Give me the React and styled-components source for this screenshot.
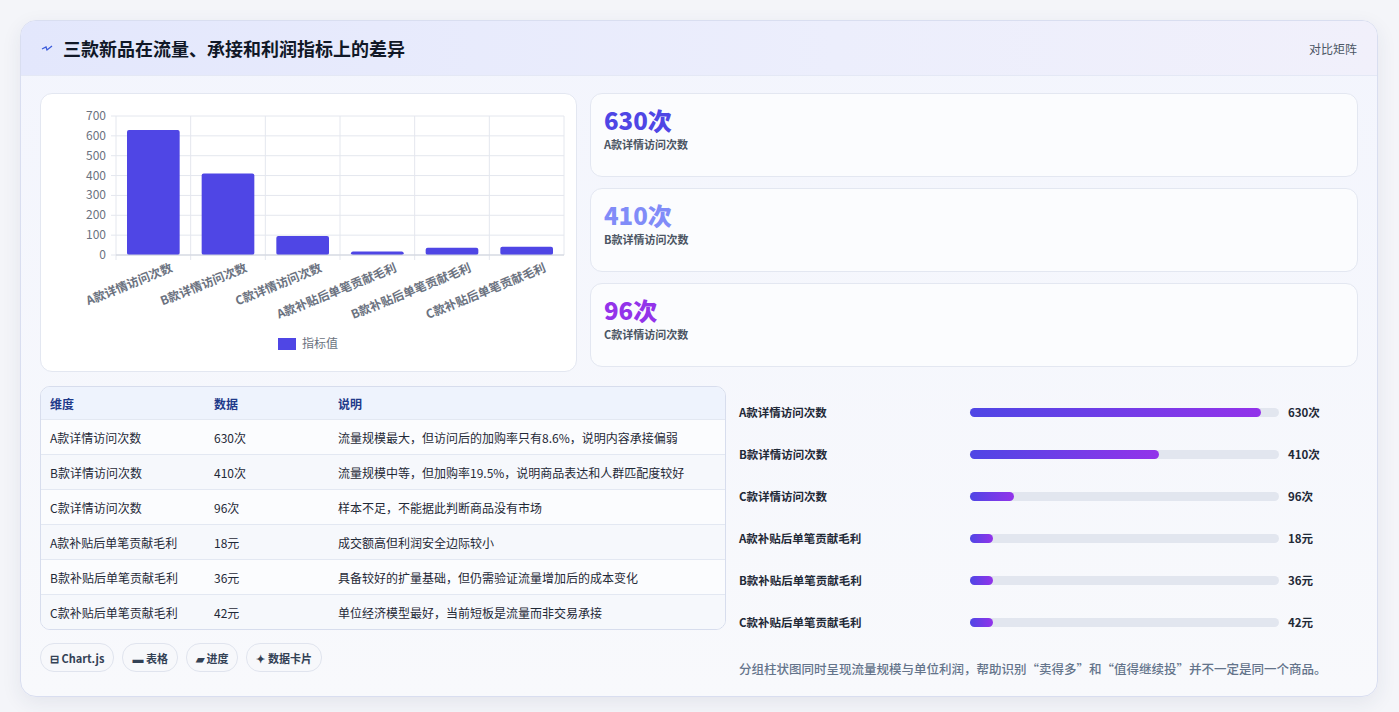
import React from "react";
import styled, { createGlobalStyle } from "styled-components";

const Global = createGlobalStyle`
  body { margin: 0; background: #f4f5f9; font-family: "Noto Sans CJK SC", "Noto Sans", sans-serif; }
`;

const rows = [
  { name: "A款详情访问次数", v: 630, unit: "次", note: "流量规模最大，但访问后的加购率只有8.6%，说明内容承接偏弱" },
  { name: "B款详情访问次数", v: 410, unit: "次", note: "流量规模中等，但加购率19.5%，说明商品表达和人群匹配度较好" },
  { name: "C款详情访问次数", v: 96, unit: "次", note: "样本不足，不能据此判断商品没有市场" },
  { name: "A款补贴后单笔贡献毛利", v: 18, unit: "元", note: "成交额高但利润安全边际较小" },
  { name: "B款补贴后单笔贡献毛利", v: 36, unit: "元", note: "具备较好的扩量基础，但仍需验证流量增加后的成本变化" },
  { name: "C款补贴后单笔贡献毛利", v: 42, unit: "元", note: "单位经济模型最好，当前短板是流量而非交易承接" },
];

const Page = styled.div`padding: 20px 21px 20px 20px;`;
const Card = styled.div`
  background: linear-gradient(180deg, #f3f5fd, #f8f9fc);
  border: 1px solid #d9def0; border-radius: 16px;
  box-shadow: 0 6px 20px rgba(40,50,90,0.08); overflow: hidden;
`;
const Header = styled.div`
  height: 54px; display: flex; align-items: center; justify-content: space-between;
  padding: 0 20px; background: linear-gradient(90deg, #e3e7fc, #eceefc 60%, #f1f0fb);
  border-bottom: 1px solid #e4e8f5;
`;
const Title = styled.h1`
  margin: 0; font-size: 18px; font-weight: 700; color: #111827; display: flex; align-items: center; gap: 10px;
`;
const Tag = styled.span`font-size: 12px; color: #4b5563;`;
const Body = styled.div`padding: 17px 19px 18px 19px;`;
const Top = styled.div`display: grid; grid-template-columns: 537px 1fr; gap: 13px;`;
const Panel = styled.div`
  background: #fff; border: 1px solid #e3e7f1; border-radius: 12px;
`;
const Stats = styled.div`display: flex; flex-direction: column; gap: 11px;`;
const Stat = styled(Panel)`height: 84px; box-sizing: border-box; padding: 10px 13px; background: #fbfcfe;`;
const StatNum = styled.div`font-size: 24px; font-weight: 800; color: ${p => p.c}; line-height: 32px;`;
const StatLbl = styled.div`font-size: 11px; font-weight: 600; color: #4b5563;`;
const Bottom = styled.div`display: grid; grid-template-columns: 686px 1fr; gap: 13px; margin-top: 14px;`;
const Table = styled.div`
  border: 1px solid #d7dded; border-radius: 10px; overflow: hidden; background: #fbfcfe;
`;
const Row = styled.div`
  display: grid; grid-template-columns: 164px 124px 1fr; height: 35px; align-items: center;
  padding-left: 9px; font-size: 12px; color: ${p => p.head ? "#1e3a8a" : "#1f2937"};
  font-weight: ${p => p.head ? 600 : 400};
  background: ${p => p.head ? "#eef3fd" : p.alt ? "#f6f8fc" : "#fbfcfe"};
  border-top: ${p => p.head ? "none" : "1px solid #e3e8f2"};
  height: ${p => p.head ? "32px" : "34px"};
`;
const Chips = styled.div`display: flex; gap: 8px; margin-top: 13px;`;
const Chip = styled.span`
  height: 27px; padding: 0 9px; border: 1px solid #e0e4ee; border-radius: 14px; background: #f7f8fb;
  display: inline-flex; align-items: center; font-size: 11px; font-weight: 600; color: #334155;
`;
const Bars = styled.div`padding-top: 5px;`;
const BarRow = styled.div`
  display: grid; grid-template-columns: 231px 318px 1fr; align-items: center; gap: 0; height: 42px;
  font-size: 11.5px; font-weight: 600; color: #1f2937;
`;
const Track = styled.div`height: 9px; border-radius: 5px; background: #e2e6ef; margin-right: 9px; position: relative;`;
const Fill = styled.div`height: 100%; border-radius: 5px; background: linear-gradient(90deg, #4f46e5, #9333ea);`;
const Note = styled.p`margin: 16px 0 0; font-size: 12.5px; color: #64748b; font-weight: 500;`;

function Chart() {
  const x0 = 75, x1 = 523, y0 = 161, yt = 22, w = (x1 - x0) / 6;
  const sy = v => y0 - (v / 700) * (y0 - yt);
  return (
    <svg width="535" height="277" style={{ display: "block" }} fontFamily="'Noto Sans CJK SC', sans-serif">
      {[0, 100, 200, 300, 400, 500, 600, 700].map(t => (
        <g key={t}>
          <line x1={x0 - 5} x2={x1} y1={sy(t)} y2={sy(t)} stroke="#e4e7ee" />
          <text x={x0 - 10} y={sy(t) + 4} fontSize="12" fill="#6b7280" textAnchor="end">{t}</text>
        </g>
      ))}
      {rows.map((r, i) => <line key={i} x1={x0 + i * w} x2={x0 + i * w} y1={yt} y2={y0 + 5} stroke="#e4e7ee" />)}
      <line x1={x1} x2={x1} y1={yt} y2={y0} stroke="#e4e7ee" />
      {rows.map((r, i) => (
        <rect key={i} x={x0 + i * w + 11} width={w - 22} y={sy(r.v)} height={y0 - sy(r.v)} rx="2" fill="#4f46e5" />
      ))}
      <line x1={x0} x2={x1} y1={y0} y2={y0} stroke="#cfd3dc" />
      {rows.map((r, i) => (
        <text key={i} transform={`translate(${x0 + i * w + w / 2 + 20},${y0 + 16}) rotate(-22)`} fontSize="12" fill="#6b7280" textAnchor="end" fontWeight="600">{r.name}</text>
      ))}
      <rect x="237" y="244" width="18" height="12" fill="#4f46e5" />
      <text x="261" y="254" fontSize="12" fill="#6b7280">指标值</text>
    </svg>
  );
}

export default function App() {
  const colors = ["#4f46e5", "#818cf8", "#9333ea"];
  return (
    <Page>
      <Global />
      <Card>
        <Header>
          <Title>
            <svg width="12" height="10" viewBox="0 0 12 10"><path d="M1 6 L5 4 L6 7 L11 3" stroke="#3b5bdb" strokeWidth="1.3" fill="none" /></svg>
            三款新品在流量、承接和利润指标上的差异
          </Title>
          <Tag>对比矩阵</Tag>
        </Header>
        <Body>
          <Top>
            <Panel><Chart /></Panel>
            <Stats>
              {rows.slice(0, 3).map((r, i) => (
                <Stat key={i}><StatNum c={colors[i]}>{r.v}{r.unit}</StatNum><StatLbl>{r.name}</StatLbl></Stat>
              ))}
            </Stats>
          </Top>
          <Bottom>
            <div>
              <Table>
                <Row head><span>维度</span><span>数据</span><span>说明</span></Row>
                {rows.map((r, i) => (
                  <Row key={i} alt={i % 2 === 1}><span>{r.name}</span><span>{r.v}{r.unit}</span><span>{r.note}</span></Row>
                ))}
              </Table>
              <Chips>
                <Chip>⊟ Chart.js</Chip><Chip>▬ 表格</Chip><Chip>▰ 进度</Chip><Chip>✦ 数据卡片</Chip>
              </Chips>
            </div>
            <div>
              <Bars>
                {rows.map((r, i) => (
                  <BarRow key={i}>
                    <span>{r.name}</span>
                    <Track><Fill style={{ width: `${Math.max(r.v / 670 * 100, 7.5)}%` }} /></Track>
                    <span>{r.v}{r.unit}</span>
                  </BarRow>
                ))}
              </Bars>
              <Note>分组柱状图同时呈现流量规模与单位利润，帮助识别“卖得多”和“值得继续投”并不一定是同一个商品。</Note>
            </div>
          </Bottom>
        </Body>
      </Card>
    </Page>
  );
}
